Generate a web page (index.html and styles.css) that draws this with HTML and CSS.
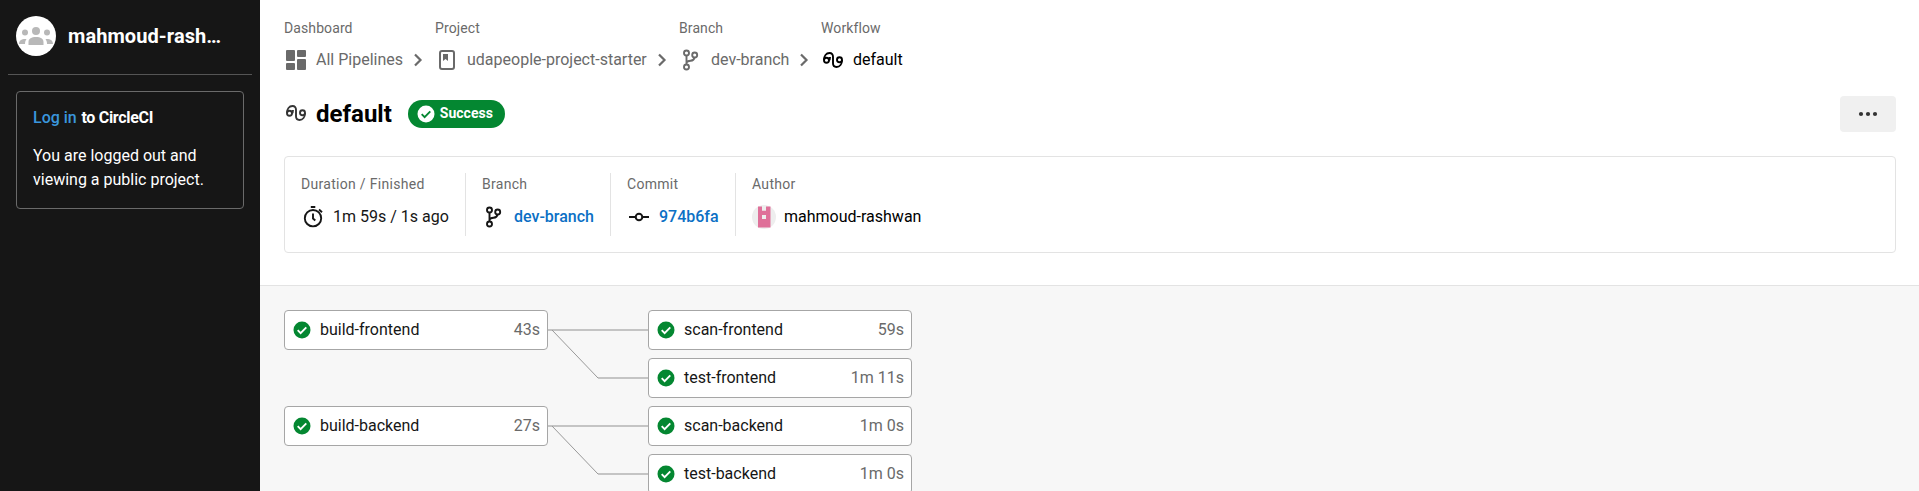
FILE: index.html
```html
<!DOCTYPE html>
<html lang="en">
<head>
<meta charset="utf-8">
<title>default - CircleCI</title>
<link rel="stylesheet" href="styles.css">
</head>
<body>
<svg class="sprite" aria-hidden="true">
  <symbol id="branch" viewBox="0 0 24 24"><g fill="none" stroke="currentColor" stroke-width="1.9"><circle cx="7.500" cy="5" r="2.500"/><circle cx="7.500" cy="19" r="2.500"/><circle cx="15.700" cy="7" r="2.500"/><path d="M7.500 7.500v9M15.500 9.500c-.3 2.200-1.500 3-4 3.300-2 .2-3.500.6-4 1.800"/></g></symbol>
  <symbol id="flow" viewBox="0 0 24 24"><g fill="none" stroke="currentColor" stroke-width="1.9"><circle cx="5.500" cy="12.300" r="2.500"/><circle cx="18.500" cy="11.700" r="2.500"/><path d="M3 12C3 8 5.200 5 8.500 5c2.400 0 3.500 1.500 3.500 3.700v6.600c0 2.200 1.100 3.700 3.500 3.700 3.300 0 5.500-3 5.500-7M8 12.300c.8-.6 1-1.600 1-3.300"/></g></symbol>
  <symbol id="chev" viewBox="0 0 24 24"><path d="M9 6.500l5.500 5.500L9 17.500" fill="none" stroke="currentColor" stroke-width="2.200"/></symbol>
  <symbol id="ok" viewBox="0 0 18 18"><circle cx="9" cy="9" r="8.500" fill="var(--disc)"/><path d="M4.700 9.200l2.900 2.900 5.700-5.700" fill="none" stroke="var(--tick)" stroke-width="1.900"/></symbol>
</svg>
<div class="app">
  <aside class="sidebar">
    <div class="org">
      <svg class="avatar" viewBox="0 0 40 40"><circle cx="20" cy="20" r="20" fill="#fff"/><g fill="#b8b8b8"><circle cx="20" cy="15" r="4"/><circle cx="9" cy="16.500" r="3"/><circle cx="31" cy="16.500" r="3"/><path d="M12.500 29v-3c0-3.500 3-5 7.500-5s7.500 1.500 7.500 5v3zM3 28c0-3.500 2.500-5.300 7.500-5-1 1.500-1.500 3-1.500 5zM37 28c0-3.500-2.500-5.300-7.500-5 1 1.500 1.500 3 1.500 5z"/></g></svg>
      <span class="org-name">mahmoud-rash…</span>
    </div>
    <div class="login">
      <div class="login-title"><a>Log in</a> to CircleCI</div>
      <p>You are logged out and viewing a public project.</p>
    </div>
  </aside>
  <main class="main">
    <header class="header">
      <nav class="crumbs">
        <div class="crumb all"><span class="label">Dashboard</span><div class="row"><svg class="icon" viewBox="0 0 24 24" fill="currentColor"><rect x="2" y="2" width="9" height="11" rx="1"/><rect x="13" y="2" width="9" height="7" rx="1"/><rect x="2" y="15" width="9" height="7" rx="1"/><rect x="13" y="11" width="9" height="11" rx="1"/></svg><span>All Pipelines</span><svg class="chev"><use href="#chev"/></svg></div></div>
        <div class="crumb project"><span class="label">Project</span><div class="row"><svg class="icon" viewBox="0 0 24 24"><rect x="5" y="3" width="14" height="18" rx="2" fill="none" stroke="currentColor" stroke-width="2"/><path d="M8 6h5v7l-2.500-2L8 13z" fill="currentColor"/></svg><span>udapeople-project-starter</span><svg class="chev"><use href="#chev"/></svg></div></div>
        <div class="crumb branch"><span class="label">Branch</span><div class="row"><svg class="icon"><use href="#branch"/></svg><span>dev-branch</span><svg class="chev"><use href="#chev"/></svg></div></div>
        <div class="crumb current"><span class="label">Workflow</span><div class="row"><svg class="icon"><use href="#flow"/></svg><span>default</span></div></div>
      </nav>
      <div class="title-bar">
        <svg class="icon title-icon"><use href="#flow"/></svg>
        <h1>default</h1>
        <span class="badge"><svg class="ok"><use href="#ok"/></svg>Success</span>
        <button class="more" aria-label="More"><svg width="20" height="6" fill="#333"><circle cx="3" cy="3" r="2.100"/><circle cx="10" cy="3" r="2.100"/><circle cx="17" cy="3" r="2.100"/></svg></button>
      </div>
      <section class="info">
        <div class="item duration"><span class="label">Duration / Finished</span><div class="row"><svg class="icon" viewBox="0 0 24 24" fill="none" stroke="currentColor" stroke-width="1.900"><circle cx="12" cy="13.200" r="8.200"/><path d="M12 8.500v5l2.300 2M9.800 2h4.500M18 4.500l3 2.800"/></svg><span class="medium">1m 59s<span class="slash"> / </span>1s ago</span></div></div>
        <div class="item info-branch"><span class="label">Branch</span><div class="row"><svg class="icon"><use href="#branch"/></svg><a class="medium">dev-branch</a></div></div>
        <div class="item commit"><span class="label">Commit</span><div class="row"><svg class="icon" viewBox="0 0 24 24" fill="none" stroke="currentColor" stroke-width="2"><circle cx="12" cy="12" r="3.300"/><path d="M2 12h6.700M15.300 12H22"/></svg><a class="medium">974b6fa</a></div></div>
        <div class="item author"><span class="label">Author</span><div class="row"><svg class="icon" viewBox="0 0 24 24"><circle cx="12" cy="12" r="12" fill="#eee"/><path fill-rule="evenodd" d="M6 1.500h4v4.200h4V1.500h4.500v21H6zM10 10v4h4v-4z" fill="#df7099"/></svg><span>mahmoud-rashwan</span></div></div>
      </section>
    </header>
    <section class="graph">
      <div class="column">
        <div class="job"><svg class="ok"><use href="#ok"/></svg><span>build-frontend</span><time>43s</time></div>
        <div class="job"><svg class="ok"><use href="#ok"/></svg><span>build-backend</span><time>27s</time></div>
      </div>
      <svg class="edges" width="100" height="184" viewBox="0 0 100 184" fill="none"><g stroke="#c4c4c4" stroke-width="2"><path d="M0 20H100M50 68H100M0 116H100M50 164H100"/></g><g stroke="#999"><path d="M4 20L50 68M4 116L50 164"/></g></svg>
      <div class="column tight">
        <div class="job"><svg class="ok"><use href="#ok"/></svg><span>scan-frontend</span><time>59s</time></div>
        <div class="job"><svg class="ok"><use href="#ok"/></svg><span>test-frontend</span><time>1m 11s</time></div>
        <div class="job"><svg class="ok"><use href="#ok"/></svg><span>scan-backend</span><time>1m 0s</time></div>
        <div class="job"><svg class="ok"><use href="#ok"/></svg><span>test-backend</span><time>1m 0s</time></div>
      </div>
    </section>
  </main>
</div>
</body>
</html>
```

FILE: styles.css
```css
* { box-sizing: border-box; }
body { margin: 0; font: 16px/24px Roboto, "Liberation Sans", sans-serif; color: #161616; }
.sprite { display: none; }
.app { display: flex; height: 491px; overflow: hidden; }
.sidebar { width: 260px; flex: none; background: #161616; color: #fff; padding: 0 8px; }
.org { display: flex; align-items: center; gap: 12px; height: 75px; padding: 0 20px 3px 8px; border-bottom: 1px solid #555; }
.avatar { width: 40px; height: 40px; flex: none; }
.org-name { font-size: 20px; font-weight: 700; letter-spacing: .08px; white-space: nowrap; }
.login { margin: 16px 8px 0; height: 118px; border: 1px solid #6a6a6a; border-radius: 4px; padding: 14px 16px; }
.login-title { font-weight: 700; letter-spacing: -.3px; }
.login-title a { color: #3a96dd; font-weight: 500; letter-spacing: 0; margin-right: 1px; }
.login p { margin: 14px 0 0; }
.main { flex: 1; min-width: 0; display: flex; flex-direction: column; }
.header { height: 286px; flex: none; padding: 16px 23px 0 24px; border-bottom: 1px solid #e3e3e3; }
.label { display: block; font-size: 14px; letter-spacing: .1px; color: #6a6a6a; white-space: nowrap; }
.row { display: flex; align-items: center; white-space: nowrap; }
.icon { width: 24px; height: 24px; flex: none; }
.row .icon { margin-right: 8px; }
.crumbs { display: flex; height: 60px; color: #6a6a6a; }
.crumb .row { margin-top: 8px; }
.chev { width: 24px; height: 24px; margin-left: 3px; }
.all { width: 151px; }
.project { width: 244px; }
.branch { width: 142px; }
.current .row { color: #000; }
.title-bar { display: flex; align-items: center; height: 76px; }
.title-icon { margin: -3px 8px 0 0; color: #343434; }
h1 { margin: 0 16px 0 0; font-size: 24px; line-height: 32px; font-weight: 700; color: #000; }
.badge { display: flex; align-items: center; gap: 5px; height: 28px; padding: 0 12px 2px 9px; border-radius: 14px; background: #048731; color: #fff; font-size: 14px; font-weight: 700; }
.ok { width: 18px; height: 18px; flex: none; --disc: #048731; --tick: #fff; }
.badge .ok { --disc: #fff; --tick: #048731; margin-top: 2px; }
.more { margin-left: auto; width: 56px; height: 36px; padding: 0; border: 0; border-radius: 4px; background: #f0f0f0; display: flex; align-items: center; justify-content: center; }
.info { display: flex; height: 97px; margin-top: 4px; border: 1px solid #e3e3e3; border-radius: 4px; padding: 16px; }
.item { height: 63px; border-right: 1px solid #e3e3e3; margin-right: 16px; }
.item .label { line-height: 22px; letter-spacing: .3px; }
.item .row { margin-top: 10px; }
.item a { color: #0b70c5; }
.medium { font-weight: 500; }
.duration .medium { font-weight: 450; }
.slash { font-weight: 400; }
.duration { width: 165px; }
.info-branch { width: 129px; }
.commit { width: 109px; }
.author { border: 0; }
.author .row { color: #000; }
.graph { flex: 1; background: #f7f7f7; display: flex; align-items: flex-start; padding: 24px; }
.column { display: flex; flex-direction: column; gap: 56px; width: 264px; }
.tight { gap: 8px; }
.job { display: flex; align-items: center; gap: 9px; height: 40px; padding: 0 7px 0 8px; background: #fff; border: 1px solid #a6a6a6; border-radius: 4px; }
.job time { margin-left: auto; color: #6a6a6a; }
.edges { flex: none; }
```
